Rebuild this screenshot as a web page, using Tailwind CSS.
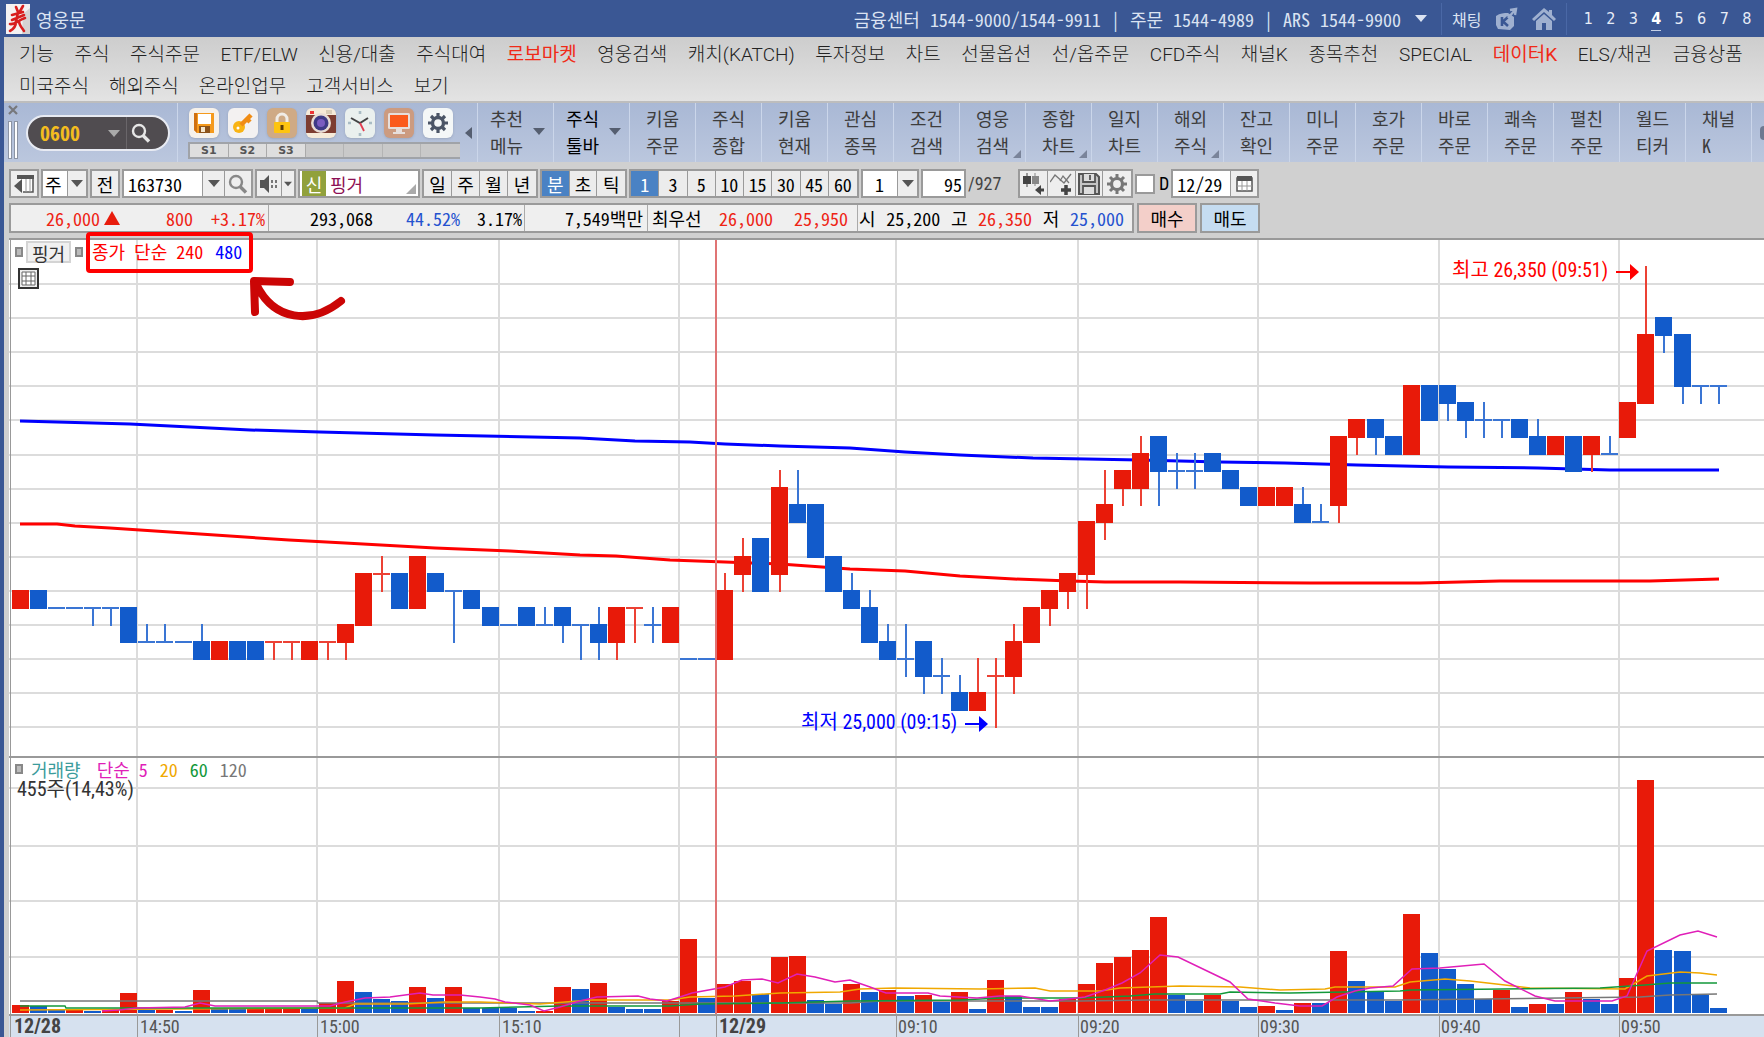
<!DOCTYPE html>
<html lang="ko">
<head>
<meta charset="utf-8">
<meta name="viewport" content="width=device-width, initial-scale=1">
<title>영웅문</title>
<script src="https://cdn.jsdelivr.net/npm/@tailwindcss/browser@4"></script>
</head>
<body class="flex min-h-screen flex-col overflow-x-hidden bg-[#d0d0d0] font-['Noto_Sans_Mono_CJK_KR','Noto_Sans_CJK_KR',sans-serif] text-lg leading-6 text-[#1a1a1a]">

<svg class="hidden">
  <symbol id="down" viewBox="0 0 12 7"><path d="M0 0h12L6 7z" fill="currentColor"/></symbol>
  <symbol id="lens" viewBox="0 0 20 20"><circle cx="8" cy="8" r="6" fill="none" stroke="currentColor" stroke-width="2.4"/><path d="M12 12.500l6 6" stroke="currentColor" stroke-width="3.400"/></symbol>
  <symbol id="corner" viewBox="0 0 8 8"><path d="M8 0v8H0z" fill="currentColor"/></symbol>
</svg>

<header class="flex h-[37px] items-center bg-[#3a5794] pl-1.5 text-[#dbe3f2]">
  <svg class="h-[30px] w-6 shrink-0" viewBox="0 0 24 30"><rect width="24" height="30" fill="#f4f2f2"/><path d="M17 10l7-6v26h-8z" fill="#d5d3d3"/><path d="M10 3l2 5M17 2l-4 7M6 11l11-3M6 16l12-5M12 8l-2 10M4 20c5 1 8-4 15-6M10 17c0 5-2 8-6 10M13 17c0 4 3 7 5 10" stroke="#d81e1e" stroke-width="2.600" fill="none" stroke-linecap="round"/></svg>
  <h1 class="ml-1.5">영웅문</h1>
  <p class="ml-auto flex gap-2.5 whitespace-nowrap"><span>금융센터</span><span>1544-9000/1544-9911</span><span>|</span><span>주문</span><span>1544-4989</span><span>|</span><span>ARS</span><span>1544-9900</span></p>
  <button class="ml-3.5 flex h-6 w-4 items-center" aria-label="연락처"><svg class="h-[7px] w-3"><use href="#down"/></svg></button>
  <div class="ml-2.5 flex h-8 items-center border-x border-[#4a68a6] px-2.5">
    <a href="#" class="w-[30px] font-['Noto_Sans_CJK_KR',sans-serif] text-base">채팅</a>
    <a href="#" class="ml-3" aria-label="키움"><svg class="h-6 w-6" viewBox="0 0 24 24"><path d="M2 9c4-3 8-3 12-3l6 4v9l-4 4-12-1-2-4z" fill="#9fb0d0"/><path d="M8 10v9M14 10l-5 4.500 5 4.500" stroke="#3a5794" stroke-width="2.600" fill="none"/><path d="M14 11l7-8M16 3l6-1-1 6" stroke="#9fb0d0" stroke-width="2.400" fill="none"/></svg></a>
    <a href="#" class="ml-3.5" aria-label="홈"><svg class="h-6 w-6" viewBox="0 0 24 24"><path d="M12 1L0 12l2 2L12 5l10 9 2-2-4-4V3h-3v2z" fill="#9fb0d0"/><path d="M12 7l8 7v9h-6v-7h-4v7H4v-9z" fill="#9fb0d0"/></svg></a>
  </div>
  <nav class="flex w-[197px] justify-around pl-2.5 pr-1.5 font-['DejaVu_Sans_Condensed','Noto_Sans_CJK_KR',sans-serif] text-base text-[#e6ecf7]" aria-label="가상화면">
    <a href="#">1</a><a href="#">2</a><a href="#">3</a><a href="#" class="h-6 border-b border-[#c5d0e6] font-bold text-white">4</a><a href="#">5</a><a href="#">6</a><a href="#">7</a><a href="#">8</a>
  </nav>
</header>

<div class="flex flex-1 flex-col border-l-4 border-[#3a5794]">
  <nav class="border-b-2 border-[#bdbdbd] bg-linear-to-b from-[#cdcdcd] to-[#e3e3e3] pt-1 pl-[15px] pr-[21px] font-['Roboto','Noto_Sans_CJK_KR',sans-serif] text-[19px] font-light text-[#222]">
    <div class="flex h-7 items-center justify-between whitespace-nowrap">
      <a href="#">기능</a><a href="#">주식</a><a href="#">주식주문</a><a href="#">ETF/ELW</a><a href="#">신용/대출</a><a href="#">주식대여</a><a href="#" class="font-normal text-[#f02a18]">로보마켓</a><a href="#">영웅검색</a><a href="#">캐치(KATCH)</a><a href="#">투자정보</a><a href="#">차트</a><a href="#">선물옵션</a><a href="#">선/옵주문</a><a href="#">CFD주식</a><a href="#">채널K</a><a href="#">종목추천</a><a href="#">SPECIAL</a><a href="#" class="font-normal text-[#f02a18]">데이터K</a><a href="#">ELS/채권</a><a href="#">금융상품</a>
    </div>
    <div class="flex h-8 items-center gap-5 pt-1 whitespace-nowrap">
      <a href="#">미국주식</a><a href="#">해외주식</a><a href="#">온라인업무</a><a href="#">고객서비스</a><a href="#">보기</a>
    </div>
  </nav>

  <div class="flex h-[59px] overflow-hidden bg-linear-to-b from-[#a9b8d5] to-[#bbc7de]">
    <div class="flex w-[174px] shrink-0 border-r border-[#cbd6ea] pl-1">
      <div class="flex w-3 flex-col gap-1.5 pt-0.5">
        <button aria-label="닫기"><svg class="h-2.5 w-2.5" viewBox="0 0 10 10"><path d="M1 1l8 8M9 1L1 9" stroke="#77787c" stroke-width="2.200"/></svg></button>
        <span class="flex h-[38px] gap-0.5"><i class="w-1 border border-[#8c94a4] bg-white"></i><i class="w-1 border border-[#8c94a4] bg-white"></i></span>
      </div>
      <div class="mt-3 ml-1.5 flex h-9 w-36 items-center rounded-full border-2 border-[#e8ebf3] bg-[#504c50] pl-3 text-[#f4bd1f]">
        <input aria-label="화면번호" value="0600" class="w-[46px] bg-transparent text-xl font-bold outline-none">
        <svg class="ml-[22px] h-[7px] w-3 text-[#aaa]"><use href="#down"/></svg>
        <button class="ml-1.5 flex h-8 items-center border-l border-[#6a666a] pl-1 text-[#e6e6e6]" aria-label="검색"><svg class="h-5 w-5"><use href="#lens"/></svg></button>
      </div>
    </div>
    <div class="w-[276px] shrink-0 pt-[5px] ml-1.5">
      <div class="flex gap-[9px] pl-[5px]">
        <button aria-label="저장" class="h-[30px] w-[30px] rounded-md bg-[#f6f1ea] p-[5px] shadow"><svg viewBox="0 0 20 20"><path d="M0 0h20v20H3l-3-3z" fill="#f59a1c"/><path d="M0 0h3v20l-3-3z" fill="#d0700f"/><rect x="4" y="1" width="13" height="10" fill="#fff"/><rect x="5" y="13" width="11" height="7" fill="#8c531a"/><rect x="7" y="14" width="4" height="5" fill="#f5e6cc"/></svg></button>
        <button aria-label="비밀번호" class="h-[30px] w-[30px] rounded-md bg-[#f3f1f1] p-[5px] shadow"><svg viewBox="0 0 20 20"><circle cx="6" cy="14" r="6" fill="#f9b414"/><path d="M8 12L18 2M14 6l3 3" stroke="#f08c14" stroke-width="4.500"/><circle cx="5" cy="15" r="1.500" fill="#fff"/></svg></button>
        <button aria-label="잠금" class="h-[30px] w-[30px] rounded-md bg-[#cfaa85] p-1 shadow"><svg viewBox="0 0 22 22"><path d="M6 11V7a5 5 0 0110 0v4" fill="none" stroke="#f0ece6" stroke-width="3"/><rect x="3" y="10" width="16" height="11" rx="1" fill="#fdc410"/><path d="M11 13v5" stroke="#5b3c06" stroke-width="3"/></svg></button>
        <button aria-label="화면캡쳐" class="h-[30px] w-[30px] overflow-hidden rounded-md bg-[#f6ead8] shadow"><svg viewBox="0 0 30 30"><rect x="4" y="3" width="4" height="3" fill="#e33"/><rect x="20" y="2" width="6" height="4" fill="#d9cdb8"/><rect y="7" width="30" height="18" fill="#7d3d31"/><circle cx="15" cy="15" r="10" fill="#e8dcd4"/><circle cx="15" cy="15" r="7.500" fill="#3f3a86"/><circle cx="15" cy="15" r="4" fill="#7a5cc0"/></svg></button>
        <button aria-label="시간" class="h-[30px] w-[30px] rounded-md bg-[#eaf0ee] shadow"><svg viewBox="0 0 30 30"><path d="M15 3v3M15 25v3M3 15h3M24 15h3" stroke="#a9bcc4" stroke-width="2.600"/><path d="M6 10l9 5 8-5" stroke="#444" stroke-width="2" fill="none"/><path d="M15 15l4 8" stroke="#e33c50" stroke-width="1.800"/></svg></button>
        <button aria-label="화면" class="h-[30px] w-[30px] rounded-md bg-[#cc9b80] p-[3px] shadow"><svg viewBox="0 0 24 24"><rect x="1" y="2" width="22" height="16" rx="1.500" fill="#e6dedb"/><rect x="3" y="4" width="18" height="12" fill="#fb5a1c"/><path d="M9 18h6v3h3v2H6v-2h3z" fill="#e6dedb"/></svg></button>
        <button aria-label="설정" class="h-[30px] w-[30px] rounded-md bg-[#f4f7f7] p-[5px] shadow"><svg viewBox="0 0 20 20"><circle cx="10" cy="10" r="5.500" fill="none" stroke="#4b5566" stroke-width="3.400"/><path d="M10 0v3.500M10 16.500V20M0 10h3.500M16.500 10H20M3 3l2.500 2.500M14.500 14.500L17 17M17 3l-2.500 2.500M5.500 14.500L3 17" stroke="#4b5566" stroke-width="3.200"/></svg></button>
      </div>
      <div class="mt-1 ml-1 grid h-[17px] grid-cols-7 border-2 border-r-0 border-[#a0a3a8] bg-[#c9c9c9] font-['DejaVu_Sans',sans-serif] text-[11px] leading-[13px] font-bold text-[#555]">
        <button class="border-r border-[#aaa] bg-[#dedede]">S1</button><button class="border-r border-[#aaa] bg-[#dedede]">S2</button><button class="border-r border-[#aaa] bg-[#dedede]">S3</button><span class="border-r border-[#b4b4b4]"></span><span class="border-r border-[#b4b4b4]"></span><span class="border-r border-[#b4b4b4]"></span><span></span>
      </div>
    </div>
    <button class="flex w-[18px] shrink-0 items-center justify-center border-r border-[#cbd6ea]" aria-label="접기"><svg class="h-3 w-[7px]" viewBox="0 0 7 12"><path d="M7 0v12L0 6z" fill="#555e70"/></svg></button>
    <button class="flex w-[76px] shrink-0 items-center border-r border-[#cbd6ea] pl-3 pb-0.5 text-left leading-[27px] text-[#3d3d3d]"><span>추천<br>메뉴</span><svg class="ml-2.5 h-[7px] w-3 text-[#555e70]"><use href="#down"/></svg></button>
    <button class="flex w-[76px] shrink-0 items-center border-r border-[#cbd6ea] pl-3 pb-0.5 text-left leading-[27px] font-medium text-black"><span>주식<br>툴바</span><svg class="ml-2.5 h-[7px] w-3 text-[#555e70]"><use href="#down"/></svg></button>
    <nav id="tools" class="grid flex-1 auto-cols-fr grid-flow-col text-center leading-[27px] text-[#3d3d3d]" aria-label="주식 툴바"></nav>
    <button class="flex w-3 shrink-0 items-center justify-end" aria-label="다음"><i class="h-3.5 w-1 rounded-l-full bg-[#6d7890]"></i></button>
  </div>

  <div class="flex flex-1 flex-col bg-[#d0d0d0] pl-[5px]">
    <div class="flex h-9 items-end gap-0.5 pt-2 text-black">
      <button class="flex h-[29px] w-[30px] items-center justify-center border-2 border-[#9a9a9a] bg-[#eee]" aria-label="목록"><svg class="h-5 w-5" viewBox="0 0 20 20"><path d="M4 2h15v16H9" fill="#fff" stroke="#555" stroke-width="1.500"/><path d="M3 1h17v4H3z" fill="#555"/><path d="M12 5v13M16 5v13" stroke="#999"/><path d="M8 5v14l-8-7z" fill="#555"/></svg></button>
      <label class="flex h-[29px] w-[47px] items-stretch border-2 border-[#9a9a9a] bg-white"><select aria-label="종류" class="w-6 appearance-none pl-0.5 outline-none"><option>주</option></select><span class="flex flex-1 items-center justify-center border-l border-[#9a9a9a] bg-[#eee] text-[#555]"><svg class="h-[7px] w-3"><use href="#down"/></svg></span></label>
      <button class="h-[29px] w-[30px] border-2 border-[#9a9a9a] bg-[#eee]">전</button>
      <label class="flex h-[29px] w-[131px] items-stretch border-2 border-[#9a9a9a] bg-white"><input aria-label="종목코드" value="163730" class="w-[78px] pl-1 outline-none"><span class="flex w-[22px] items-center justify-center border-l border-[#9a9a9a] bg-[#eee] text-[#555]"><svg class="h-[7px] w-3"><use href="#down"/></svg></span><span class="flex flex-1 items-center justify-center border-l border-[#9a9a9a] bg-[#eee] text-[#888]"><svg class="h-5 w-5"><use href="#lens"/></svg></span></label>
      <div class="flex h-[29px] w-[41px] border-2 border-[#9a9a9a] bg-[#eee] text-[#555]"><button class="flex w-6 items-center justify-center" aria-label="소리"><svg class="h-5 w-[18px]" viewBox="0 0 18 20"><path d="M0 6h4l5-5v18l-5-5H0z" fill="#555"/><path d="M12 6v3M12 11v3M16 6v3M16 11v3" stroke="#777" stroke-width="2"/></svg></button><button class="flex flex-1 items-center justify-center border-l border-[#9a9a9a]" aria-label="소리 메뉴"><svg class="h-1.5 w-2"><use href="#down"/></svg></button></div>
      <div class="relative flex h-[29px] w-[122px] items-center border-2 border-[#9a9a9a] bg-white px-0.5"><span class="flex h-[25px] w-6 items-center justify-center bg-[#91a13c] text-white">신</span><span class="ml-1 text-[#8d1055]">핑거</span><svg class="absolute right-0.5 bottom-0.5 h-2.5 w-2.5 text-[#aaa]"><use href="#corner"/></svg></div>
      <div class="grid h-[29px] w-[116px] grid-cols-4 divide-x divide-[#9a9a9a] border-2 border-[#9a9a9a] bg-[#ececec]"><button>일</button><button>주</button><button>월</button><button>년</button></div>
      <div class="grid h-[29px] w-[87px] grid-cols-3 divide-x divide-[#9a9a9a] border-2 border-[#9a9a9a] bg-[#ececec]"><button class="bg-[#4a82c4] text-white">분</button><button>초</button><button>틱</button></div>
      <div class="grid h-[29px] w-[230px] grid-cols-8 divide-x divide-[#9a9a9a] border-2 border-[#9a9a9a] bg-[#ececec]"><button class="bg-[#4a82c4] text-white">1</button><button>3</button><button>5</button><button>10</button><button>15</button><button>30</button><button>45</button><button>60</button></div>
      <label class="flex h-[29px] w-[58px] items-stretch border-2 border-[#9a9a9a] bg-white"><select aria-label="주기" class="w-[34px] appearance-none pl-3 outline-none"><option>1</option></select><span class="flex flex-1 items-center justify-center border-l border-[#9a9a9a] bg-[#eee] text-[#555]"><svg class="h-[7px] w-3"><use href="#down"/></svg></span></label>
      <input aria-label="표시 개수" value="95" class="h-[29px] w-[45px] border-2 border-[#9a9a9a] bg-white pr-0.5 text-right outline-none">
      <span class="h-[29px] w-12 font-['Roboto_Condensed','Noto_Sans_CJK_KR',sans-serif] leading-[29px] text-[#444]">/927</span>
      <div class="grid h-[29px] w-[115px] grid-cols-4 divide-x divide-[#9a9a9a] border-2 border-[#9a9a9a] bg-[#eee]">
        <button class="flex items-center justify-center" aria-label="차트 추가"><svg class="h-[22px] w-[22px]" viewBox="0 0 22 22"><path d="M5 0v14" stroke="#444"/><rect x="1" y="3" width="8" height="8" fill="#444"/><path d="M13 0v13" stroke="#888"/><rect x="10" y="3" width="7" height="8" fill="#888"/><path d="M22 17h-4" stroke="#444" stroke-width="3"/><path d="M19 12v10l-6-5z" fill="#444"/></svg></button>
        <button class="flex items-center justify-center" aria-label="지표 추가"><svg class="h-[22px] w-[22px]" viewBox="0 0 22 22"><path d="M0 9l5-7 9 8 7-9M10 8l3-5 6 7" stroke="#777" stroke-width="1.300" fill="none"/><path d="M16 12v10M11 17h10" stroke="#444" stroke-width="3.500"/></svg></button>
        <button class="flex items-center justify-center" aria-label="저장"><svg class="h-[22px] w-[22px]" viewBox="0 0 22 22"><path d="M1 1h17l3 3v17H1z" fill="#c4c4c4" stroke="#555" stroke-width="2"/><path d="M5 1v8h12V1M5 21v-8h12v8M12 2v5" stroke="#555" stroke-width="1.800" fill="#ddd"/></svg></button>
        <button class="flex items-center justify-center" aria-label="설정"><svg class="h-5 w-5" viewBox="0 0 20 20"><circle cx="10" cy="10" r="5.500" fill="none" stroke="#777" stroke-width="3.200"/><path d="M10 0v4M10 16v4M0 10h4M16 10h4M3 3l3 3M14 14l3 3M17 3l-3 3M6 14l-3 3" stroke="#777" stroke-width="3"/></svg></button>
      </div>
      <label class="flex h-[29px] items-center gap-1 font-['Roboto_Condensed','Noto_Sans_CJK_KR',sans-serif]"><input type="checkbox" class="h-5 w-5 appearance-none border-2 border-[#9a9a9a] bg-white">D</label>
      <label class="flex h-[29px] w-[88px] items-stretch border-2 border-[#9a9a9a] bg-white"><input aria-label="날짜" value="12/29" class="w-[57px] pl-1 outline-none"><span class="flex flex-1 items-center justify-center border-l border-[#9a9a9a] bg-[#eee]"><svg class="h-[17px] w-[17px]" viewBox="0 0 17 17"><rect x="1" y="3" width="15" height="13" fill="#fff" stroke="#555" stroke-width="1.500"/><path d="M1 1h15v5H1z" fill="#555"/><path d="M6 6v10M11 6v10M1 11h15" stroke="#999"/></svg></span></label>
    </div>

    <div class="mt-[5px] flex h-[30px] gap-[3px] text-black">
      <dl class="flex w-[1125px] items-center border-2 border-[#9a9a9a] bg-[#efefef] whitespace-nowrap">
        <dd class="flex h-full w-[258px] items-center border-r border-[#aaa] text-right text-[#ee2415]"><span class="w-[89px]">26,000</span><svg class="ml-1 h-3.5 w-4" viewBox="0 0 16 14"><path d="M8 0l8 14H0z" fill="#e81c0c"/></svg><span class="w-[73px]">800</span><span class="w-[72px]">+3.17%</span></dd>
        <dd class="flex h-full w-[256px] items-center border-r border-[#aaa] text-right"><span class="w-[104px]">293,068</span><span class="w-[87px] text-[#2452cf]">44.52%</span><span class="w-[62px]">3.17%</span></dd>
        <dd class="flex h-full w-[123px] items-center justify-end border-r border-[#aaa] pr-1">7,549백만</dd>
        <dd class="flex h-full w-[210px] items-center border-r border-[#aaa] pl-1"><span class="w-[67px]">최우선</span><span class="w-[75px] text-[#ee2415]">26,000</span><span class="text-[#ee2415]">25,950</span></dd>
        <dd class="flex flex-1 items-center justify-between pr-2 pl-px"><span>시</span><span>25,200</span><span>고</span><span class="text-[#ee2415]">26,350</span><span>저</span><span class="text-[#2452cf]">25,000</span></dd>
      </dl>
      <button class="w-[60px] border-2 border-[#9a9a9a] bg-[#f3cfc9] font-medium">매수</button>
      <button class="w-[60px] border-2 border-[#9a9a9a] bg-[#c5dcf1] font-medium">매도</button>
    </div>

    <main class="relative mt-[5px]">
      <svg id="chart" class="block h-auto w-full" viewBox="9 238 1755 799" role="img" aria-label="핑거 1분봉 차트">
        <rect x="9" y="238" width="1755" height="777" fill="#fff"/>
        <rect x="9" y="1015" width="1755" height="22" fill="#d6e1ef"/>
        <g id="grid" stroke="#dcdcdc" stroke-width="2" shape-rendering="crispEdges"></g>
        <g fill="none" stroke-width="3" stroke-linejoin="round">
          <polyline stroke="#00f" points="20,421 57,422 130,424 250,430 320,432 435,435 580,438 635,441 690,442 725,444 780,446 850,448 905,452 960,455 1033,458 1140,460 1220,462 1285,463 1357,465 1448,467 1538,468 1610,470 1719,470"/>
          <polyline stroke="#f00" points="20,524 57,524 75,526 110,528 200,534 289,540 345,543 435,548 510,551 580,555 616,556 670,560 725,562 780,564 850,569 905,571 960,576 1014,579 1070,581 1105,582 1180,582 1310,583 1420,583 1500,581 1650,581 1719,579"/>
        </g>
        <g id="candles" shape-rendering="crispEdges"></g>
        <g fill="none" stroke-width="1.500">
          <polyline stroke="#777" points="20,1001 317,1001 318,1003 850,1003 880,1001 1080,1001 1150,1000 1400,1000 1560,998 1640,997 1670,995 1717,994"/>
          <polyline stroke="#f0a800" points="20,1010 345,1008 355,1004 405,1004 445,1002 480,1002 540,1004 590,1000 670,1000 690,997 735,996 780,993 840,992 860,989 895,988 980,989 1035,988 1050,991 1100,991 1120,988 1180,986 1240,987 1280,990 1325,989 1335,987 1395,987 1410,982 1445,979 1470,981 1505,985 1530,988 1625,989 1647,976 1680,972 1700,973 1717,975"/>
          <polyline stroke="#12983a" points="20,1006 65,1006 66,1008 480,1008 560,1006 670,1006 700,1004 780,1003 850,1001 960,1000 1000,998 1080,998 1130,996 1155,994 1220,994 1230,992 1290,993 1400,991 1410,990 1600,988 1645,985 1670,983 1717,983"/>
          <polyline stroke="#e01fb8" points="102,1011 119,1010 137,1008 185,1007 200,1003 215,1006 330,1006 345,1002 365,998 390,997 420,993 433,995 460,995 480,997 495,999 505,1002 530,1005 544,1011 560,1007 580,1001 597,997 638,996 650,999 667,1001 680,997 692,993 725,987 742,980 762,979 778,983 797,974 815,977 835,982 850,980 870,987 886,993 928,993 940,996 977,998 1000,996 1020,996 1050,1001 1060,1000 1085,997 1105,990 1122,983 1140,973 1160,955 1178,957 1230,982 1248,999 1275,1003 1300,1006 1322,1006 1337,997 1355,991 1370,988 1393,986 1412,969 1440,968 1484,964 1505,981 1535,996 1555,1001 1612,1001 1627,996 1647,951 1680,935 1698,931 1717,937"/>
        </g>
        <g shape-rendering="crispEdges">
          <path d="M716 239V1015" stroke="#e07474" stroke-width="2"/>
          <path d="M9 239H1764M9 757H1764M9 1015H1764" stroke="#999" stroke-width="2"/>
          <path d="M10 238V1037M137 1015v22M317 1015v22M499 1015v22M679 1015v22M716 1015v22M896 1015v22M1078 1015v22M1258 1015v22M1439 1015v22M1619 1015v22" stroke="#999" stroke-width="1"/>
        </g>
        <g class="font-['Roboto_Condensed','Noto_Sans_CJK_KR',sans-serif] text-lg" fill="#555">
          <g class="font-bold" fill="#444"><text x="14" y="1033" class="text-xl">12/28</text><text x="719" y="1033" class="text-xl">12/29</text></g>
          <text x="140" y="1033">14:50</text><text x="320" y="1033">15:00</text><text x="502" y="1033">15:10</text><text x="898" y="1033">09:10</text><text x="1080" y="1033">09:20</text><text x="1260" y="1033">09:30</text><text x="1441" y="1033">09:40</text><text x="1621" y="1033">09:50</text>
        </g>
        <g class="font-['Roboto_Condensed','Noto_Sans_CJK_KR',sans-serif] text-xl">
          <text x="1452" y="277" fill="#f00">최고 26,350 (09:51)</text>
          <text x="801" y="729" fill="#00f">최저 25,000 (09:15)</text>
        </g>
        <path d="M1616 271h14v-7l9 8-9 8v-7h-14z" fill="#f00"/>
        <path d="M965 723h14v-7l9 8-9 8v-7h-14z" fill="#00f"/>
      </svg>

      <div class="absolute top-0.5 left-1.5 flex h-6 items-center">
        <i class="h-2.5 w-2 border-2 border-[#888] bg-[#bbb]"></i>
        <button class="ml-[3px] h-[22px] w-[45px] border-2 border-[#d4d4d4] bg-[#f0f0f0] leading-5 text-[#333]">핑거</button>
        <i class="ml-1 h-2.5 w-2 border-2 border-[#888] bg-[#bbb]"></i>
      </div>
      <div class="absolute -top-1.5 left-[77px] flex h-[41px] w-[167px] items-center rounded-sm border-4 border-[#f00] pb-1 pl-0.5 whitespace-nowrap text-[#f00]"><span>종가 단순 240</span><span class="ml-3 text-[#00f]">480</span></div>
      <button class="absolute top-[30px] left-[9px] flex h-[21px] w-[21px] items-center justify-center border-2 border-[#333] bg-[#eee]" aria-label="표"><svg class="h-[15px] w-[15px]" viewBox="0 0 15 15"><path d="M1 1h13v13H1zM5 1v13M10 1v13M1 5h13M1 10h13" fill="#fff" stroke="#666"/></svg></button>
      <svg class="absolute top-8 left-[236px] h-[56px] w-[106px]" viewBox="245 270 106 56"><path d="M290 282l-36-1 1 31M256 284c18 37 55 41 85 17" fill="none" stroke="#cb0505" stroke-width="8" stroke-linecap="round" stroke-linejoin="round"/></svg>
      <div class="absolute top-[65%] left-1.5 pt-0.5 whitespace-nowrap">
        <div class="flex h-5 items-center">
          <i class="h-2.5 w-2 border-2 border-[#888] bg-[#bbb]"></i>
          <span class="ml-2 text-[#3c9c9c]">거래량</span><span class="ml-4 text-[#e01fb8]">단순 5</span><span class="ml-3 text-[#f0a800]">20</span><span class="ml-3 text-[#12983a]">60</span><span class="ml-3 text-[#777]">120</span>
        </div>
        <div class="ml-0.5 h-5 font-['Roboto_Condensed','Noto_Sans_CJK_KR',sans-serif] text-xl leading-5 text-[#333]">455주(14,43%)</div>
      </div>
    </main>
  </div>
</div>

<script>
const tools = [["키움","주문"],["주식","종합"],["키움","현재"],["관심","종목"],["조건","검색"],["영웅","검색",1],["종합","차트",1],["일지","차트"],["해외","주식",1],["잔고","확인"],["미니","주문"],["호가","주문"],["바로","주문"],["쾌속","주문"],["펼친","주문"],["월드","티커"],["채널","K"]];
document.getElementById("tools").innerHTML = tools.map(([a, b, more]) =>
  `<a href="#" class="relative flex items-center justify-center border-r border-[#cbd6ea] pb-0.5 text-left"><span>${a}<br>${b}</span>${more ? '<svg class="absolute right-1 bottom-1 h-2 w-2 text-[#7a849a]"><use href="#corner"/></svg>' : ""}</a>`).join("");

// Candles: colour, body top, body bottom, high, low, in 50-won steps above 25,000
const candles = `R8,7 B8,7 B7,7 B7,7 B7,7,7,6 B7,7,7,6 B7,5 B5,5,6 B5,5,6 B5,5 B5,4,6 R5,4 B5,4 B5,4 R5,5,5,4 R5,5,5,4 R5,4 R5,5,5,4 R6,5,6,4 R9,6
R9,9,10,8 B9,7 R10,7 B9,8 B8,8,8,5 B8,7 B7,6 B6,6 B7,6 B6,6,7 B7,6,7,5 B6,6,6,4 B6,5,7,4 R7,5,7,4 R7,7,7,5 B6,6,7,5 R7,5 B4,4 B4,4 R8,4,9
R10,9,11,8 B11,8 R14,9,15,8 B13,12,15 B13,10 B10,8 B8,7,9 B7,5,8 B5,4,6 B4,4,6,3 B5,3,5,2 B3,3,4,2 B2,1,3 R2,1,4 R3,3,4,0 R5,3,6,2 R7,5 R8,7,8,6 R9,8,9,7 R12,9,12,7
R13,12,15,11 R15,14,15,13 R16,14,17,13 B17,15,17,13 B15,15,16,14 B15,15,16,14 B16,15 B15,14 B14,13 R14,13 R14,13 B13,12,14 B12,12,13 R17,13,17,12 R18,17,18,16 B18,17,18,16 B17,16 R20,16 B20,18 B20,19,20,18
B19,18,19,17 B18,18,19,17 B18,18,18,17 B18,17 B17,16,18 R17,16 B17,15 R17,16,17,15 B16,16,17 R19,17 R23,19,27 B24,23,24,22 B23,20,23,19 B20,20,20,19 B20,20,20,19`.split(/\s+/);
const volumes = `R8 B7 B4 R4 B2 R3 R20 B3 R3 B2 R23 B4 B4 R4 R5 R5 B4 R10 R32 B21 B14 B12 R26 B15 R26 B5 B5 B5 B2 R2 R26 B24 R30 B6 B4 B4 R12 R74 B15 R29
R32 B19 R56 R57 B13 B9 R29 B21 R23 B17 R18 B11 R21 B4 R33 B17 B6 B6 R14 R29 R50 R56 R63 R96 B18 B12 R18 B12 B6 R7 B3 R10 B10 R62 B32 B21 B12 R99 B60 B44
B29 B14 R23 B6 R9 B9 R21 B14 B9 R35 R233 B63 B62 B18 B5`.split(/\s+/);
const fill = { R: "#e81a09", B: "#125bcb" };
const line = { R: "#ec4134", B: "#3a75d4" };
const rect = (x, y, w, h, c) => `<rect x="${x}" y="${y}" width="${w}" height="${h}" fill="${c}"/>`;
const priceY = level => Math.round(727 - level * 17.05);
const centre = i => Math.round(20 + i * 18.06);
let out = "";
candles.forEach((c, i) => {
  const [top, bottom, high = top, low = bottom] = c.slice(1).split(",").map(Number);
  const x = centre(i);
  if (high > top || low < bottom) out += rect(x, priceY(high) - 1, 2, priceY(low) - priceY(high) + 2, line[c[0]]);
  out += top === bottom
    ? rect(x - 8, priceY(top) - 1, 17, 2, line[c[0]])
    : rect(x - 8, priceY(top) - 1, 17, priceY(bottom) - priceY(top) + 2, fill[c[0]]);
});
volumes.forEach((v, i) => {
  const h = Number(v.slice(1));
  out += rect(centre(i) - 8, 1013 - h, 17, h, fill[v[0]]);
});
document.getElementById("candles").innerHTML = out;
const rows = [788, 846, 901, 957];
for (let i = 0; i < 14; i++) rows.push(Math.round(284 + i * 34.1));
const cols = [137, 317, 499, 679, 896, 1078, 1258, 1439, 1619];
document.getElementById("grid").innerHTML =
  rows.map(y => `<path d="M9 ${y}H1764"/>`).join("") + cols.map(x => `<path d="M${x} 239V1015"/>`).join("");
</script>
</body>
</html>
